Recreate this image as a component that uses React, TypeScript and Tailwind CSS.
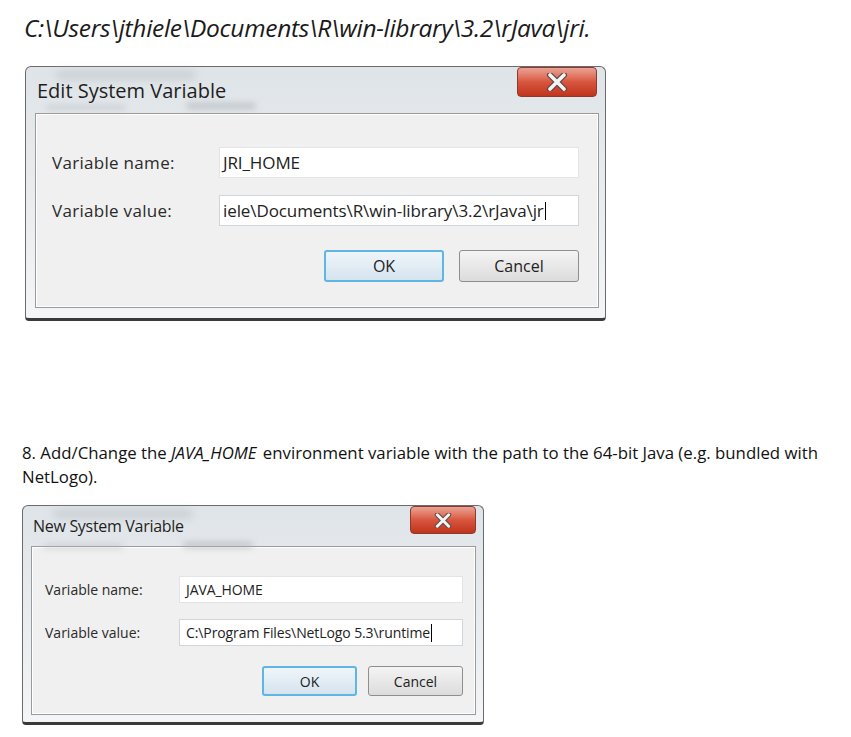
import React from 'react';

interface DialogProps {
  title: string;
  name: string;
  value: string;
  big?: boolean;
}

function CloseButton({ big }: { big?: boolean }) {
  return (
    <div
      className={`flex items-center justify-center rounded-[4px] border border-[#8a3a2e] bg-gradient-to-b from-[#e9a395] via-[#d8553d] to-[#c0331d] ${
        big ? 'w-[80px] h-[30px]' : 'w-[66px] h-[28px]'
      }`}
    >
      <svg width={big ? 22 : 18} height={big ? 18 : 15} viewBox="0 0 22 18">
        <path d="M4 2 L18 16 M18 2 L4 16" stroke="#5b4a4a" strokeWidth="6" strokeLinecap="round" />
        <path d="M4 2 L18 16 M18 2 L4 16" stroke="#f4f4f4" strokeWidth="3.6" strokeLinecap="round" />
      </svg>
    </div>
  );
}

function Dialog({ title, name, value, big }: DialogProps) {
  const labelCls = big ? 'text-[17px] tracking-[0.3px]' : 'text-[14px]';
  const fieldCls = big
    ? 'h-[31px] w-[360px] text-[17px] pl-[3px] tracking-[-0.1px]'
    : 'h-[27px] w-[284px] text-[14px] pl-[6px] tracking-[-0.1px]';
  const btnCls = big ? 'w-[120px] h-[32px] text-[16px]' : 'w-[95px] h-[30px] text-[14px]';
  return (
    <div
      className={`relative rounded-t-[6px] rounded-b-[4px] border border-[#6b6b6b] border-b-[3px] border-b-[#3a3a3a] bg-gradient-to-b from-[#dfe4e8] to-[#f3f5f6] ${
        big ? 'w-[581px] pl-[9px] pr-[6px] pb-[10px]' : 'w-[462px] pl-[8px] pr-[7px] pb-[7px]'
      }`}
      style={{ fontFamily: '"Open Sans", "Noto Sans", sans-serif' }}
    >
      {/* aero blur smudges */}
      <div className="absolute left-[30px] top-[4px] w-[140px] h-[8px] rounded-full bg-[#b9bec2] blur-[4px] opacity-60" />
      <div className="absolute left-[160px] top-[36px] w-[70px] h-[6px] rounded-full bg-[#a9aeb3] blur-[3px] opacity-60" />
      <div className="absolute left-[20px] top-[38px] w-[80px] h-[5px] rounded-full bg-[#b5b9bd] blur-[3px] opacity-50" />
      <div className={`relative flex items-start justify-between ${big ? 'h-[46px]' : 'h-[40px]'}`}>
        <div
          className={`text-[#1e1e1e] ${
            big ? 'text-[20px] pl-[2px] pt-[9px] tracking-[0px]' : 'text-[16px] pl-[2px] pt-[8px] tracking-[-0.3px]'
          }`}
        >
          {title}
        </div>
        <div className={big ? 'mr-[2px]' : ''}>
          <CloseButton big={big} />
        </div>
      </div>
      <div
        className={`border border-[#9a9a9a] bg-[#f0f0f0] shadow-[inset_0_0_0_1px_#ffffff] ${
          big ? 'h-[195px] pl-[16px] pr-[19px] pt-[33px]' : 'h-[169px] pl-[13px] pr-[12px] pt-[29px]'
        }`}
      >
        <div className={`flex flex-col ${big ? 'gap-[17px]' : 'gap-[16px]'}`}>
          <div className="flex items-center justify-between">
            <span className={`${labelCls} text-[#2a2a2a]`}>Variable name:</span>
            <div className={`${fieldCls} flex items-center bg-white border border-[#e2e4e6] text-[#222]`}>
              {name}
            </div>
          </div>
          <div className="flex items-center justify-between">
            <span className={`${labelCls} text-[#2a2a2a]`}>Variable value:</span>
            <div className={`${fieldCls} flex items-center bg-white border border-[#cfd6dc] text-[#222] whitespace-nowrap overflow-hidden`}>
              {value}
              <span className="w-px h-[18px] bg-black ml-[1px]" />
            </div>
          </div>
        </div>
        <div className={`flex justify-end ${big ? 'gap-[15px] mt-[24px]' : 'gap-[11px] mt-[20px]'}`}>
          <div
            className={`${btnCls} flex items-center justify-center rounded-[3px] border-2 border-[#5fb5e3] bg-gradient-to-b from-[#eef5fa] to-[#d6e4ee] text-[#222]`}
          >
            OK
          </div>
          <div
            className={`${btnCls} flex items-center justify-center rounded-[3px] border border-[#8e8e8e] bg-gradient-to-b from-[#f4f4f4] to-[#dcdcdc] text-[#222]`}
          >
            Cancel
          </div>
        </div>
      </div>
    </div>
  );
}

export default function App() {
  return (
    <div className="w-[851px] h-[737px] bg-white overflow-hidden">
      <div
        className="pl-[24px] pt-[11px] text-[24.5px] leading-[34px] italic text-[#1a1a1a] tracking-[-0.3px]"
        style={{ fontFamily: '"Open Sans", "Noto Sans", sans-serif' }}
      >
        C:\Users\jthiele\Documents\R\win-library\3.2\rJava\jri.
      </div>
      <div className="pl-[25px] mt-[21px]">
        <Dialog
          big
          title="Edit System Variable"
          name="JRI_HOME"
          value="iele\Documents\R\win-library\3.2\rJava\jr"
        />
      </div>
      <div
        className="pl-[22px] mt-[120px] w-[846px] text-[16.8px] leading-[24px] text-[#111] tracking-[0px]"
        style={{ fontFamily: '"Open Sans", "Noto Sans", sans-serif' }}
      >
        8. Add/Change the <i className="pr-[2px]">JAVA_HOME</i> environment variable with the path to the 64-bit Java (e.g. bundled with NetLogo).
      </div>
      <div className="pl-[22px] mt-[16px]">
        <Dialog
          title="New System Variable"
          name="JAVA_HOME"
          value="C:\Program Files\NetLogo 5.3\runtime"
        />
      </div>
    </div>
  );
}
